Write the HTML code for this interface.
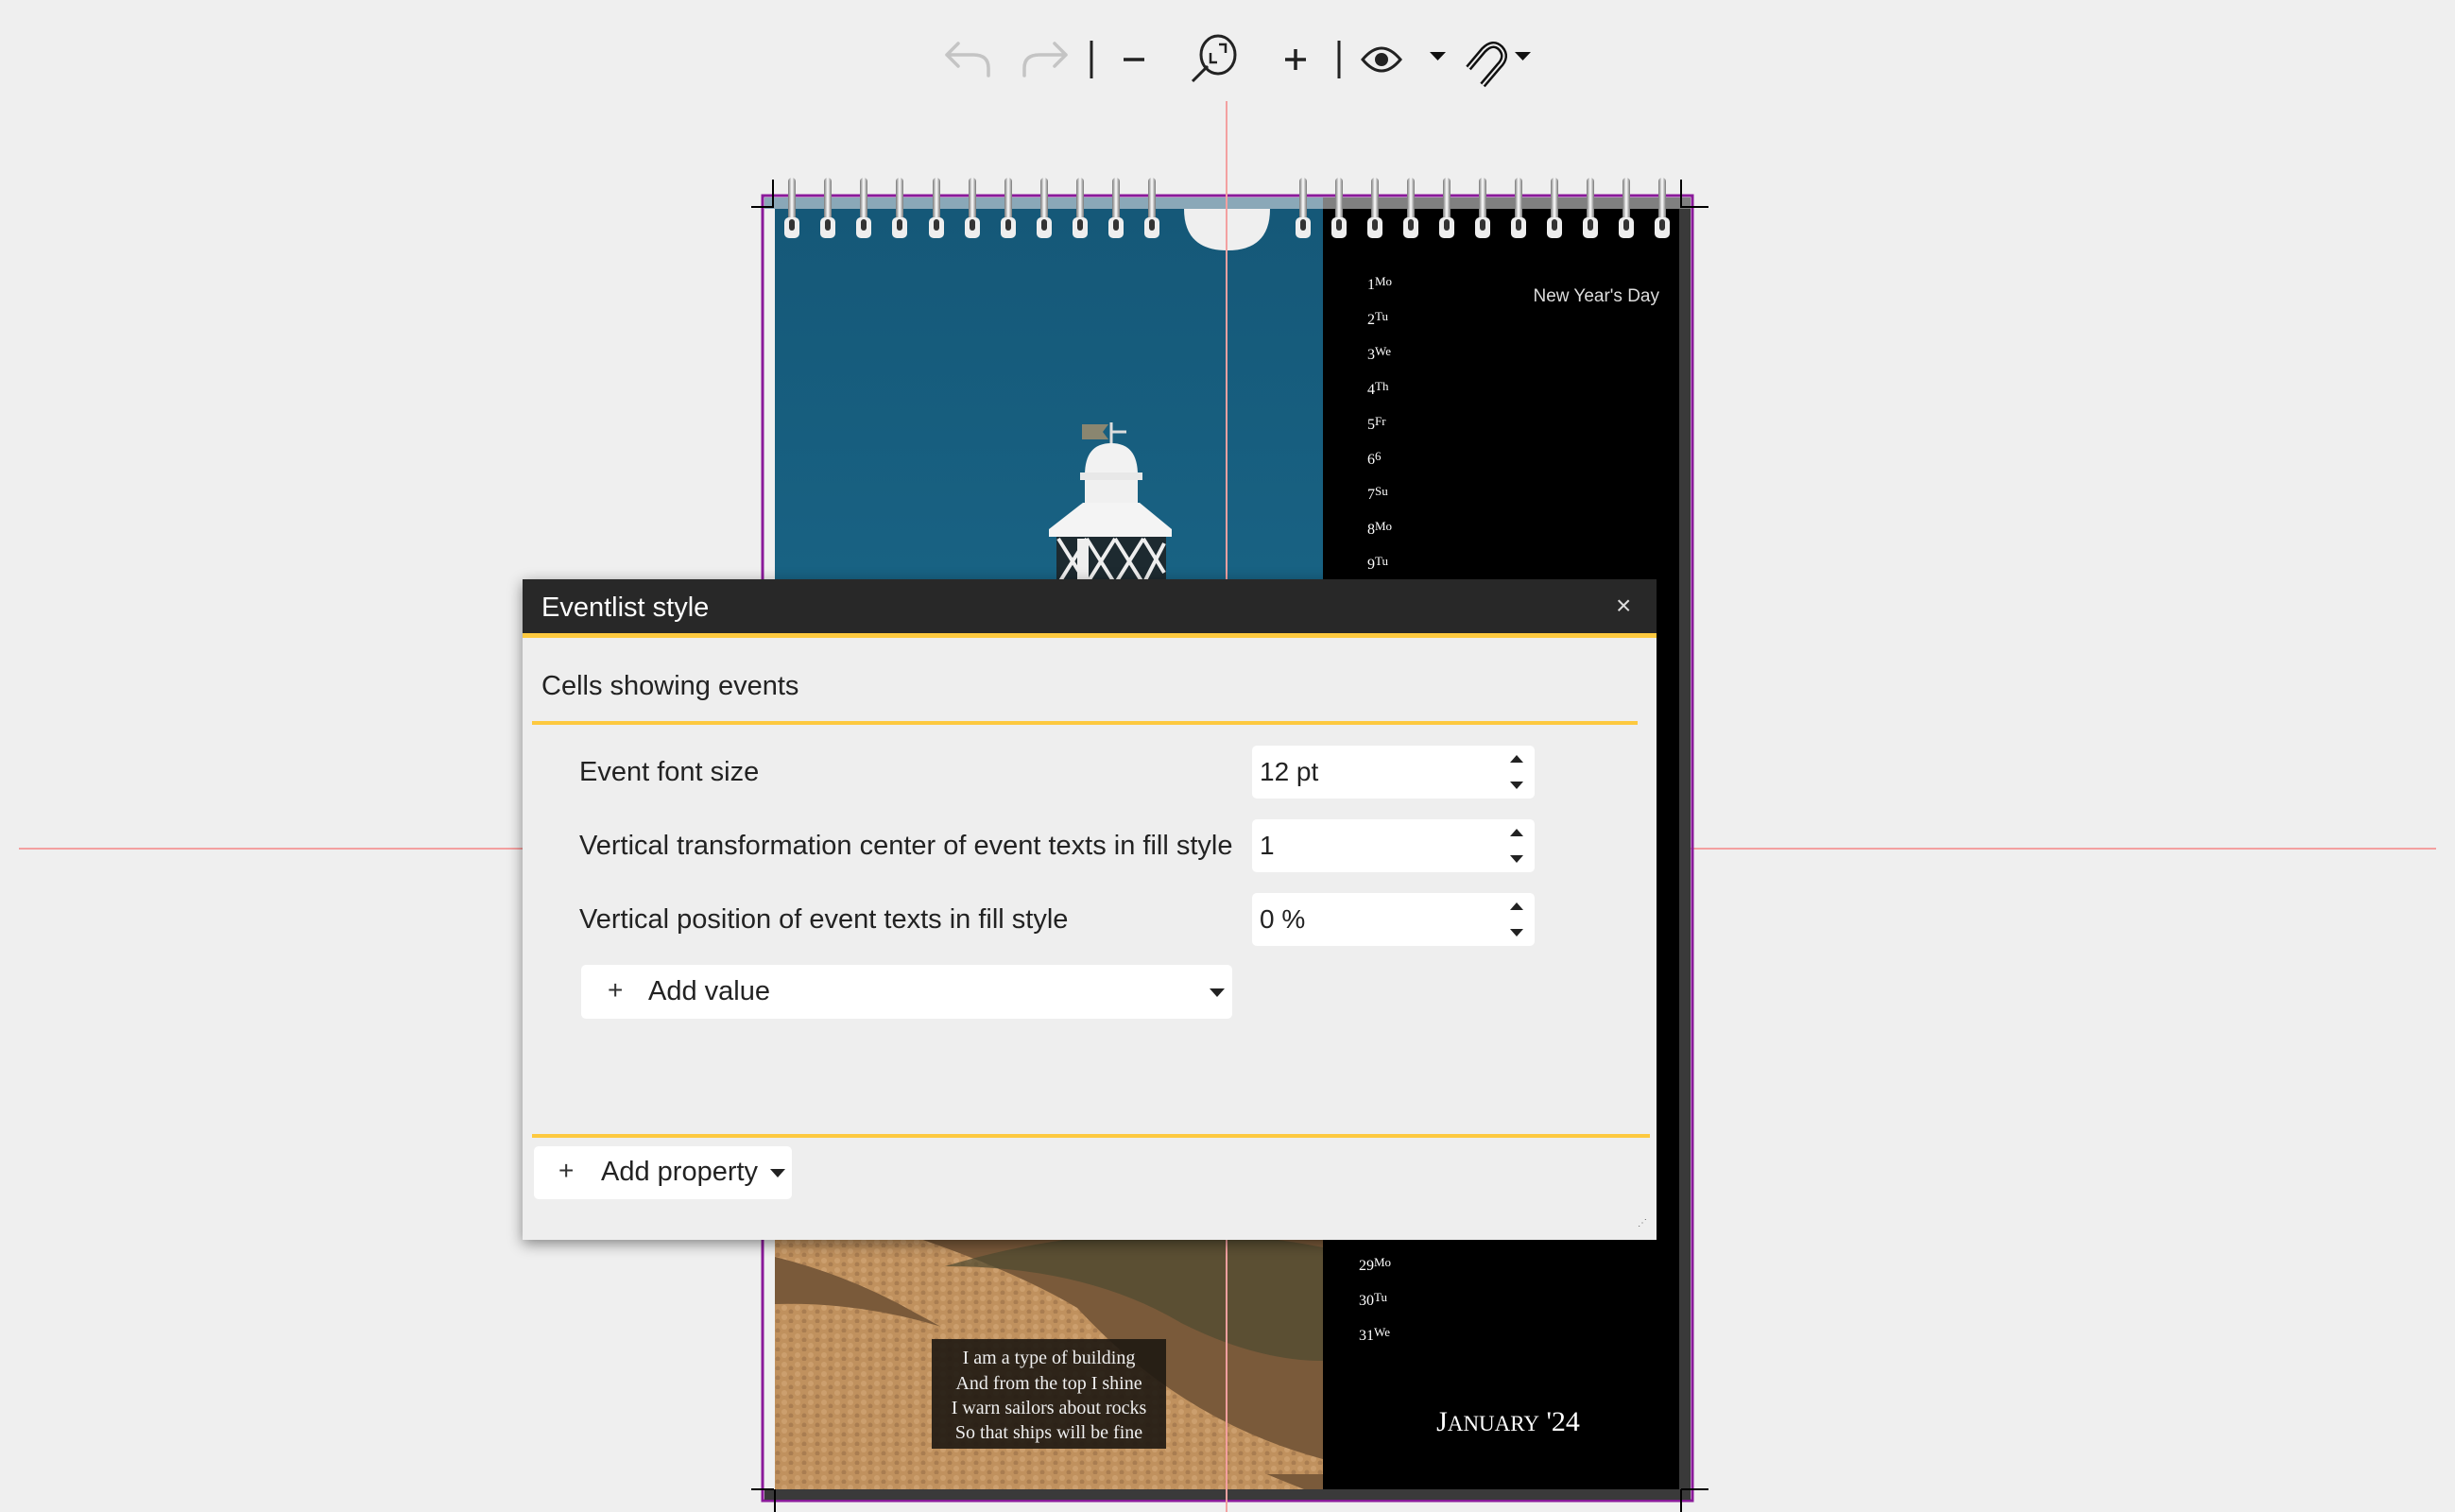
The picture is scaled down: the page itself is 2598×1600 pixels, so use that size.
<!DOCTYPE html>
<html><head><meta charset="utf-8"><style>
html,body{margin:0;padding:0}
body{width:2598px;height:1600px;background:#efefef;position:relative;overflow:hidden;font-family:"Liberation Sans",sans-serif}
.abs{position:absolute}
.dlg{position:absolute;left:553px;top:613px;width:1200px;height:699px;background:#eeeeee;box-shadow:0 4px 14px rgba(0,0,0,.45)}
.lbl{position:absolute;font-size:29px;color:#222;letter-spacing:0px;white-space:nowrap}
.inp{position:absolute;left:772px;width:299px;height:56px;background:#fff;border-radius:5px}
.inp span{position:absolute;left:8px;top:12px;font-size:28px;color:#222}
.up,.dn{position:absolute;left:273px;width:0;height:0;border-left:7px solid transparent;border-right:7px solid transparent}
.up{top:10px;border-bottom:8px solid #222}
.dn{top:38px;border-top:8px solid #222}
.serif{font-family:"Liberation Serif",serif}
</style></head><body>

<!-- toolbar -->
<svg class="abs" style="left:980px;top:30px" width="660" height="80" viewBox="980 30 660 80" fill="none">
 <g stroke="#c4c4c4" stroke-width="3.5" stroke-linecap="round" stroke-linejoin="round">
  <path d="M1046 80 v-8 q0-14-16-14 h-28 M1014 46 l-12 12 12 12"/>
  <path d="M1084 80 v-8 q0-14 16-14 h28 M1116 46 l12 12 -12 12"/>
 </g>
 <g stroke="#222" stroke-width="3">
  <path d="M1155 43 v40 M1417 43 v40"/>
  <path d="M1189 63 h22" stroke-width="3.5"/>
  <ellipse cx="1289" cy="58" rx="18" ry="20"/>
  <path d="M1278 70 l-16 16"/>
  <path d="M1281 56 v10 h7 M1290 47 h7 v9" stroke-width="2.5"/>
  <path d="M1371 52 v22 M1360 63 h22" stroke-width="3.5"/>
  <path d="M1442 63 q20-24 40 0 q-20 24-40 0z"/>
 </g>
 <circle cx="1462" cy="63" r="7" fill="#222"/>
 <path d="M1513 55 h17 l-8.5 9z M1603 55 h17 l-8.5 9z" fill="#111"/>
 <path d="M1554 72 l16-19 q10-10 18-2 q8 9-2 19 l-17 20" stroke="#111" stroke-width="7" stroke-linecap="butt"/>
 <path d="M1554 72 l16-19 q10-10 18-2 q8 9-2 19 l-17 20" stroke="#efefef" stroke-width="2"/>
</svg>

<!-- horizontal guide -->
<div class="abs" style="left:20px;top:897px;width:2558px;height:2px;background:#f3a0a0"></div>

<!-- calendar -->
<svg class="abs" style="left:780px;top:180px" width="1040" height="1420" viewBox="780 180 1040 1420">
 <defs>
  <linearGradient id="sky" x1="0" y1="0" x2="0" y2="1"><stop offset="0" stop-color="#155878"/><stop offset="1" stop-color="#1b6a8c"/></linearGradient>
  <linearGradient id="ring" x1="0" y1="0" x2="1" y2="0"><stop offset="0" stop-color="#777"/><stop offset=".5" stop-color="#fff"/><stop offset="1" stop-color="#777"/></linearGradient>
  <pattern id="grav" width="14" height="10" patternUnits="userSpaceOnUse"><rect width="14" height="10" fill="#c0915e"/><circle cx="4" cy="4" r="3" fill="#d3a878" opacity=".6"/><circle cx="11" cy="8" r="2.5" fill="#9a7048" opacity=".6"/></pattern>
 </defs>
 <rect x="807" y="207" width="984" height="1381" fill="none" stroke="#8a1a9a" stroke-width="3"/>
 <rect x="809" y="209" width="591" height="12" fill="#8aa8b8"/>
 <rect x="1400" y="209" width="389" height="12" fill="#808080"/>
 <rect x="820" y="221" width="580" height="700" fill="url(#sky)"/>
 <rect x="820" y="900" width="580" height="676" fill="#7a5a3a"/>
 <path d="M820 1330 q80 20 150 60 q150 80 250 170 l180 0 v-16 q-150-40-260-160 q-100-60-320-120z" fill="url(#grav)"/>
 <path d="M820 1380 l0 196 l560 0 q-200-80-300-140 q-130-60-260-56z" fill="url(#grav)"/>
 <path d="M1000 1340 q150 0 250 60 q80 40 150 40 v-120 q-200-40-400 20z" fill="#4f4a30" opacity=".7"/>
 <rect x="1400" y="221" width="377" height="1355" fill="#000"/>
 <rect x="1777" y="221" width="12" height="1365" fill="#3a3a3a"/>
 <rect x="809" y="1576" width="980" height="11" fill="#3a3a3a"/>
 <path d="M1253 221 h91 q0 44-45 44 q-46 0-46-44z" fill="#efefef"/>
 <!-- lighthouse -->
 <path d="M1145 449 h28 l-6 8 6 8 h-28 z" fill="#8a8670"/>
 <path d="M1176 447 v25 M1176 457 h16" stroke="#ddd" stroke-width="3"/>
 <path d="M1148 503 q0-34 28-34 q28 0 28 34z" fill="#f2f2f2"/>
 <rect x="1143" y="500" width="66" height="8" fill="#e8e8e8"/>
 <rect x="1148" y="508" width="56" height="24" fill="#f0f0f0"/>
 <path d="M1146 532 h60 l34 28 v8 h-130 v-8z" fill="#f4f4f4"/>
 <rect x="1118" y="568" width="116" height="50" fill="#1d2a30"/>
 <path d="M1120 570 l30 48 M1150 570 l-30 48 M1150 570 l30 48 M1180 570 l-30 48 M1180 570 l30 48 M1210 570 l-30 48 M1210 570 l22 36 M1232 575 l-22 43" stroke="#eee" stroke-width="4"/>
 <rect x="1140" y="570" width="12" height="48" fill="#eee"/>
 <!-- caption -->
 <rect x="986" y="1417" width="248" height="116" fill="#1e1812" opacity=".9"/>
 <g class="serif" font-family="Liberation Serif,serif" font-size="20" fill="#eee" text-anchor="middle">
  <text x="1110" y="1443">I am a type of building</text>
  <text x="1110" y="1470">And from the top I shine</text>
  <text x="1110" y="1496">I warn sailors about rocks</text>
  <text x="1110" y="1522">So that ships will be fine</text>
 </g>
 <text x="1596" y="1514" font-family="Liberation Serif,serif" font-size="30" fill="#fff" text-anchor="middle">J<tspan font-size="23">ANUARY</tspan> '24</text>
 <g font-family="Liberation Serif,serif" font-size="16" fill="#fff">
  <text x="1447" y="306">1<tspan font-size="13" dy="-4">Mo</tspan></text>
  <text x="1447" y="343">2<tspan font-size="13" dy="-4">Tu</tspan></text>
  <text x="1447" y="380">3<tspan font-size="13" dy="-4">We</tspan></text>
  <text x="1447" y="417">4<tspan font-size="13" dy="-4">Th</tspan></text>
  <text x="1447" y="454">5<tspan font-size="13" dy="-4">Fr</tspan></text>
  <text x="1447" y="491">6<tspan font-size="13" dy="-4">6</tspan></text>
  <text x="1447" y="528">7<tspan font-size="13" dy="-4">Su</tspan></text>
  <text x="1447" y="565">8<tspan font-size="13" dy="-4">Mo</tspan></text>
  <text x="1447" y="602">9<tspan font-size="13" dy="-4">Tu</tspan></text>
  <text x="1438" y="1344">29<tspan font-size="13" dy="-4">Mo</tspan></text>
  <text x="1438" y="1381">30<tspan font-size="13" dy="-4">Tu</tspan></text>
  <text x="1438" y="1418">31<tspan font-size="13" dy="-4">We</tspan></text>
 </g>
 <text x="1756" y="319" font-family="Liberation Sans,sans-serif" font-size="19" fill="#ddd" text-anchor="end">New Year's Day</text>
 <!-- rings -->
 <g id="rings">
  <g id="r"><rect x="-4" y="188" width="8" height="52" rx="4" fill="url(#ring)"/><rect x="-8" y="230" width="16" height="22" rx="5" fill="#eee"/><rect x="-3" y="232" width="6" height="12" rx="3" fill="#333"/></g>
 </g>
 <use href="#r" x="838"/><use href="#r" x="876"/><use href="#r" x="914"/><use href="#r" x="952"/><use href="#r" x="991"/><use href="#r" x="1029"/><use href="#r" x="1067"/><use href="#r" x="1105"/><use href="#r" x="1143"/><use href="#r" x="1181"/><use href="#r" x="1219"/>
 <use href="#r" x="1379"/><use href="#r" x="1417"/><use href="#r" x="1455"/><use href="#r" x="1493"/><use href="#r" x="1531"/><use href="#r" x="1569"/><use href="#r" x="1607"/><use href="#r" x="1645"/><use href="#r" x="1683"/><use href="#r" x="1721"/><use href="#r" x="1759"/>
 <!-- crop marks -->
 <path d="M795 219 h24 M818 190 v29 M1779 190 v29 h29 M795 1576 h24 M820 1576 v24 M1779 1576 h29 M1779 1576 v24" stroke="#000" stroke-width="2" fill="none"/>
</svg>
<!-- vertical guide -->
<div class="abs" style="left:1297px;top:107px;width:2px;height:1493px;background:#f3a0a0"></div>

<!-- dialog -->
<div class="dlg">
 <div class="abs" style="left:0;top:0;width:1200px;height:57px;background:#282828"></div>
 <div class="abs" style="left:0;top:57px;width:1200px;height:5px;background:#fdc93f"></div>
 <div class="abs" style="left:20px;top:14px;font-size:29px;color:#fff">Eventlist style</div>
 <div class="abs" style="left:1157px;top:12px;font-size:28px;color:#ddd">×</div>
 <div class="lbl" style="left:20px;top:97px;font-size:29px">Cells showing events</div>
 <div class="abs" style="left:10px;top:150px;width:1170px;height:4px;background:#fdc93f"></div>
 <div class="lbl" style="left:60px;top:188px">Event font size</div>
 <div class="lbl" style="left:60px;top:266px">Vertical transformation center of event texts in fill style</div>
 <div class="lbl" style="left:60px;top:344px">Vertical position of event texts in fill style</div>
 <div class="inp" style="top:176px"><span>12 pt</span><i class="up"></i><i class="dn"></i></div>
 <div class="inp" style="top:254px"><span>1</span><i class="up"></i><i class="dn"></i></div>
 <div class="inp" style="top:332px"><span>0 %</span><i class="up"></i><i class="dn"></i></div>
 <div class="abs" style="left:62px;top:408px;width:689px;height:57px;background:#fff;border-radius:5px">
  <span class="abs" style="left:28px;top:11px;font-size:28px;color:#333">+</span>
  <span class="abs" style="left:71px;top:12px;font-size:29px;color:#222">Add value</span>
  <i class="abs" style="left:665px;top:25px;border-left:8px solid transparent;border-right:8px solid transparent;border-top:9px solid #222"></i>
 </div>
 <div class="abs" style="left:10px;top:587px;width:1183px;height:4px;background:#fdc93f"></div>
 <div class="abs" style="left:12px;top:600px;width:273px;height:56px;background:#fff;border-radius:5px">
  <span class="abs" style="left:26px;top:10px;font-size:28px;color:#333">+</span>
  <span class="abs" style="left:71px;top:11px;font-size:29px;color:#222">Add property</span>
  <i class="abs" style="left:250px;top:24px;border-left:8px solid transparent;border-right:8px solid transparent;border-top:9px solid #222"></i>
 </div>
 <div class="abs" style="left:1180px;top:676px;font-size:10px;color:#666;letter-spacing:-1px">⋰</div>
</div>
</body></html>
